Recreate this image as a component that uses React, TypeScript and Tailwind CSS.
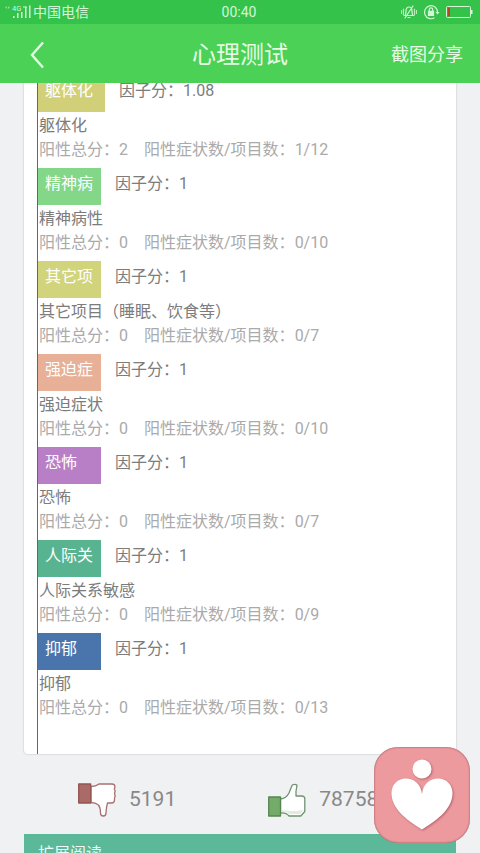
import { clsx } from "clsx";

interface Factor {
  tag: string;
  name: string;
  score: string;
  total: number;
  ratio: string;
  color: string;
  wide?: boolean;
}

const FACTORS: Factor[] = [
  { tag: "躯体化", name: "躯体化", score: "1.08", total: 2, ratio: "1/12", color: "bg-[#d1cf78]", wide: true },
  { tag: "精神病", name: "精神病性", score: "1", total: 0, ratio: "0/10", color: "bg-[#84d688]" },
  { tag: "其它项", name: "其它项目（睡眠、饮食等）", score: "1", total: 0, ratio: "0/7", color: "bg-[#d1d47a]" },
  { tag: "强迫症", name: "强迫症状", score: "1", total: 0, ratio: "0/10", color: "bg-[#e8b096]" },
  { tag: "恐怖", name: "恐怖", score: "1", total: 0, ratio: "0/7", color: "bg-[#b87fc6]" },
  { tag: "人际关", name: "人际关系敏感", score: "1", total: 0, ratio: "0/9", color: "bg-[#58b490]" },
  { tag: "抑郁", name: "抑郁", score: "1", total: 0, ratio: "0/13", color: "bg-[#4a75ac]" },
];

export default function App() {
  return (
    <div className="flex h-screen flex-col overflow-hidden bg-[#f0f1f3] font-['Roboto','Noto_Sans_CJK_SC',sans-serif]">
      <StatusBar />
      <NavBar />

      <main className="min-h-0 flex-1 overflow-hidden px-6">
        {/* Result card, scrolled slightly under the nav bar */}
        <section className="-mt-2 rounded-b-sm bg-white pl-[13px] shadow-[0_0_2px_rgba(0,0,0,0.25)]">
          <div className="border-l border-[#666] pb-7">
            {FACTORS.map((f) => (
              <FactorRow key={f.tag} factor={f} />
            ))}
          </div>
        </section>

        <Votes />

        <section className="bg-[#5bb899] px-[14px] py-2 text-base text-[#effaf5]">
          <h2>扩展阅读</h2>
        </section>
      </main>

      <FloatingHeart />
    </div>
  );
}

function StatusBar() {
  return (
    <div className="grid h-6 shrink-0 grid-cols-3 items-center bg-[#34c24b] pr-[7px] pl-[5px] text-sm text-[#d3f6d6]">
      <div className="flex items-center">
        <svg viewBox="0 0 28 16" className="h-4 w-7" fill="currentColor" aria-hidden>
          <path d="M0 3.500l2-1.500v3zM5 3.500L3 2v3z" opacity="0.5" />
          <text x="7" y="6.500" fontSize="7.500">4G</text>
          <path d="M8 12h1.500v2H8zM12 9h1.500v5H12zM16 8h1.500v6H16zM20 3h1.500v11H20zM24 1.500h1.500V14H24z" />
          <path d="M18 2.500h4v1h-4z" />
        </svg>
        <span>中国电信</span>
      </div>
      <span className="text-center">00:40</span>
      <div className="flex items-center justify-end gap-[6px]">
        {/* Vibrate */}
        <svg viewBox="0 0 16 14" className="h-[14px] w-4" fill="none" stroke="currentColor" strokeWidth="1.200" strokeLinecap="round" aria-hidden>
          <path d="M4 10.500c1-1 1-2 1-4.500 0-2.500 1.200-4 3-4s3 1.500 3 4c0 2.500 0 3.500 1 4.500zM7 12.500h2M12 1L4 13" />
          <path d="M2.500 4v6M.5 5.500v3M13.500 4v6M15.500 5.500v3" opacity="0.8" />
        </svg>
        {/* Rotation lock */}
        <svg viewBox="0 0 17 16" className="h-4 w-[17px]" fill="none" stroke="currentColor" strokeWidth="1.200" aria-hidden>
          <path d="M11.500 13.700A6.500 6.500 0 1 1 14.500 8" />
          <path d="M12.500 8h4l-2 2.600z" fill="currentColor" stroke="none" />
          <path d="M5.500 7.300h5v4h-5z" fill="currentColor" />
          <path d="M6.300 7V5.500a1.700 1.700 0 0 1 3.400 0V7" />
        </svg>
        {/* Battery, nearly empty */}
        <svg viewBox="0 0 27 12" className="h-3 w-[27px]" fill="none" stroke="currentColor" aria-hidden>
          <rect x="0.500" y="0.500" width="24" height="11" rx="1" />
          <path d="M25 4h1.500v4H25z" fill="currentColor" stroke="none" />
          <path d="M1.500 1.500h2.500v9H1.500z" fill="#b8471f" stroke="none" />
        </svg>
      </div>
    </div>
  );
}

function NavBar() {
  return (
    <header className="z-10 grid h-[59px] shrink-0 grid-cols-[1fr_auto_1fr] items-center bg-[#4bd155] px-[17px] pt-0.5 text-[#e6fbe4]">
      <button type="button" aria-label="返回" className="flex h-10 w-10 items-center justify-center">
        <svg viewBox="0 0 14 28" className="h-7 w-[14px]" fill="none" stroke="currentColor" strokeWidth="2.400" aria-hidden>
          <path d="M13 1.500L2 14l11 12.500" />
        </svg>
      </button>
      <h1 className="text-2xl">心理测试</h1>
      <button type="button" className="justify-self-end text-lg">
        截图分享
      </button>
    </header>
  );
}

function FactorRow({ factor }: { factor: Factor }) {
  return (
    <article className="pb-[6px] text-base leading-6 text-[#7c7c7c]">
      <div className="mb-0.5 flex gap-[14px]">
        <span
          className={clsx(
            "h-[37px] pt-1 pl-[7px] text-white",
            factor.wide ? "w-[67px]" : "w-[63px]",
            factor.color,
          )}
        >
          {factor.tag}
        </span>
        <span className="pt-1">因子分：{factor.score}</span>
      </div>
      <h3 className="pl-px">{factor.name}</h3>
      <p className="flex gap-4 pl-px text-[#aaa]">
        <span>阳性总分：{factor.total}</span>
        <span>阳性症状数/项目数：{factor.ratio}</span>
      </p>
    </article>
  );
}

function Votes() {
  return (
    <div className="flex h-20 items-center gap-[92px] pt-3 pl-[54px] text-[21px] text-[#888]">
      <button type="button" className="flex items-center gap-[13px]">
        <svg viewBox="0 0 38 34" className="h-[34px] w-[38px]" strokeWidth="1.300" strokeLinejoin="round" aria-hidden>
          <path
            d="M13 3.500c4 0 6-.8 8-2.500h13c2 0 3 1 3 3l-.7 2 .9 2-.7 2.500.7 2.500-.7 2v2c0 2-1 3-3 3h-4c-1 3-1.300 6-1.500 10 0 4-5.500 4-5.500 0 0-4-.5-6-2-8-2-1.500-4-2.500-7.500-2.500z"
            fill="#fff"
            stroke="#a87070"
          />
          <path d="M.7 1h12v19H.7z" fill="#a96a68" stroke="#925552" />
        </svg>
        <span>5191</span>
      </button>
      <button type="button" className="flex items-center gap-[13px]">
        <svg viewBox="0 0 38 34" className="h-[34px] w-[38px]" strokeWidth="1.300" strokeLinejoin="round" aria-hidden>
          <path
            d="M12.500 16c4-.5 7-3 8.500-6l3-7.500c.5-1.500 5-1.500 5 0l-1 5.500v5h5.500c2 0 3.300 1.300 3.300 3v12.500l-4 4.500H21c-2-2.500-4-3.500-8.500-3z"
            fill="#fff"
            stroke="#6f9270"
          />
          <path d="M14 27c8 1 14 2 21.500-.5L32.500 31H21c-2-2-4-2.500-7-2z" fill="#dfeeda" />
          <path d="M.7 14h11.800v19H.7z" fill="#74ab6a" stroke="#568650" />
        </svg>
        <span>78758</span>
      </button>
    </div>
  );
}

function FloatingHeart() {
  return (
    <button
      type="button"
      aria-label="心理助手"
      className="fixed right-[10px] bottom-[10px] z-20 h-24 w-24 rounded-3xl bg-[#ed9a9e] shadow-[inset_0_0_2px_rgba(100,40,50,0.8)]"
    >
      <svg viewBox="0 0 96 96" className="h-24 w-24 drop-shadow-[1px_1px_1px_rgba(120,50,60,0.5)]" fill="#fff" aria-hidden>
        <circle cx="48" cy="22" r="9.500" />
        <path d="M48 47C47 37 40 31.500 32 31.500c-9 0-14.500 7-14.500 14.500C17.500 61 31 72 48 82.500c17-10.500 30.500-21.500 30.500-36.500C78.500 38.500 73 31.500 64 31.500c-8 0-15 5.500-16 15.500z" />
      </svg>
    </button>
  );
}
